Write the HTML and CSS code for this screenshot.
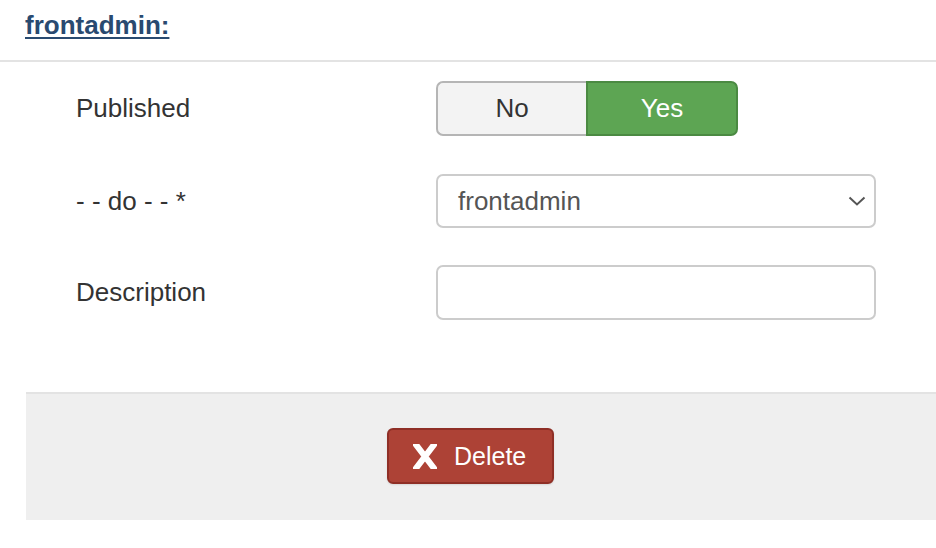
FILE: index.html
```html
<!DOCTYPE html>
<html>
<head>
<meta charset="utf-8">
<link rel="stylesheet" href="styles.css">
</head>
<body>
<div class="page">
  <div class="header"><a class="title" href="#">frontadmin:</a></div>
  <div class="form">
    <div class="row r1">
      <div class="label">Published</div>
      <div class="toggle">
        <span class="opt no">No</span>
        <span class="opt yes">Yes</span>
      </div>
    </div>
    <div class="row r2">
      <div class="label">- - do - - *</div>
      <div class="select">
        <span>frontadmin</span>
        <svg class="chev" width="18" height="10" viewBox="0 0 18 10"><path d="M1.5 1.5 L9 8.5 L16.5 1.5" fill="none" stroke="#555" stroke-width="2"/></svg>
      </div>
    </div>
    <div class="row r3">
      <div class="label">Description</div>
      <div class="input"></div>
    </div>
  </div>
  <div class="footer">
    <button class="delete">
      <svg class="xicon" width="24" height="25" viewBox="0 0 24 25"><path d="M1 -2 L23 27 M23 -2 L1 27" stroke="#fff" stroke-width="6" fill="none"/></svg>
      <span>Delete</span>
    </button>
  </div>
</div>
</body>
</html>
```
FILE: styles.css
```css
html, body {
  margin: 0;
  padding: 0;
  background: #fff;
}
body {
  font-family: "Liberation Sans", Arial, Helvetica, sans-serif;
  color: #333;
  font-size: 26px;
}
.page {
  width: 936px;
  height: 548px;
  overflow: hidden;
}
.header {
  height: 60px;
  border-bottom: 2px solid #e3e3e3;
  padding-left: 25px;
  box-sizing: content-box;
}
.title {
  display: inline-block;
  margin-top: 9px;
  font-weight: bold;
  font-size: 26px;
  line-height: 32px;
  color: #294a70;
  text-decoration: underline;
  text-decoration-thickness: 2px;
  text-underline-offset: 3px;
}
.form {
  padding-top: 19px;
  padding-left: 76px;
}
.row {
  display: flex;
  align-items: center;
}
.r1 {
  height: 55px;
  margin-bottom: 38px;
}
.r2 {
  height: 54px;
  margin-bottom: 37px;
}
.r3 {
  height: 55px;
}
.label {
  width: 360px;
  font-size: 26px;
  color: #333;
}
.toggle {
  display: flex;
  width: 302px;
  height: 55px;
  box-sizing: border-box;
}
.opt {
  flex: 1;
  display: flex;
  align-items: center;
  justify-content: center;
  font-size: 26px;
  box-sizing: border-box;
}
.no {
  background: #f3f3f3;
  color: #333;
  border: 2px solid #b5b5b5;
  border-right: none;
  border-radius: 7px 0 0 7px;
}
.yes {
  background: #5da553;
  color: #fff;
  border: 2px solid #4b8a42;
  border-radius: 0 7px 7px 0;
}
.select, .input {
  width: 440px;
  height: 55px;
  box-sizing: border-box;
  border: 2px solid #ccc;
  border-radius: 7px;
  background: #fff;
}
.select {
  display: flex;
  align-items: center;
  justify-content: space-between;
  padding: 0 8px 0 20px;
  color: #555;
  font-size: 26px;
  height: 54px;
}
.chev {
  display: block;
}
.footer {
  margin-top: 72px;
  margin-left: 26px;
  height: 92px;
  border-top: 2px solid #e3e3e3;
  background: #efefef;
  padding: 34px 0 0 361px;
  box-sizing: content-box;
}
.delete {
  display: flex;
  align-items: center;
  width: 167px;
  height: 56px;
  box-sizing: border-box;
  background: #ad4236;
  border: 2px solid #8f2f26;
  border-radius: 6px;
  color: #fff;
  font-family: "Liberation Sans", Arial, sans-serif;
  font-size: 25px;
  padding: 0 0 0 24px;
  box-shadow: 0 1px 2px rgba(0,0,0,0.1);
}
.xicon {
  display: block;
  margin-right: 17px;
}
```
